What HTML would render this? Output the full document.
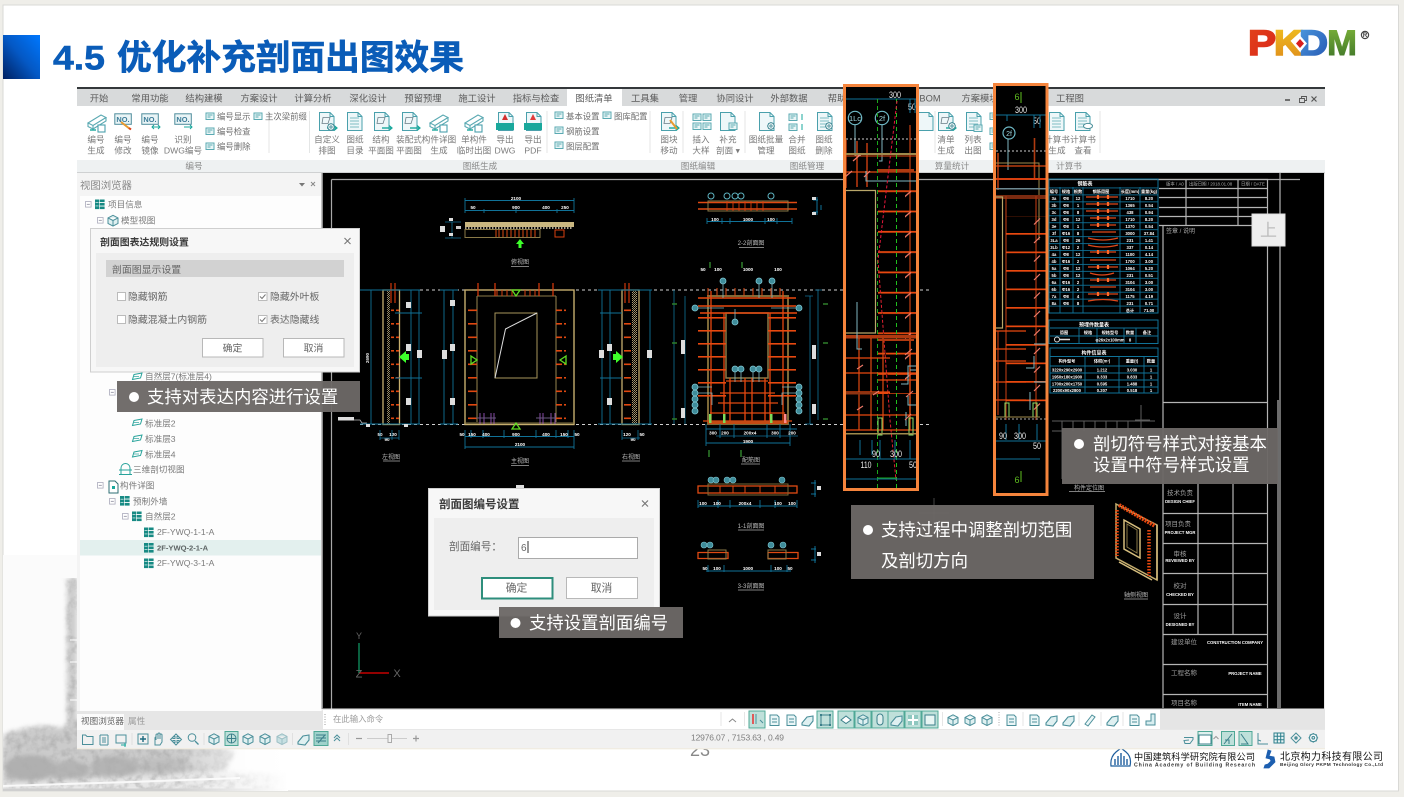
<!DOCTYPE html>
<html lang="zh"><head><meta charset="utf-8"><title>4.5 优化补充剖面出图效果</title>
<style>
html,body{margin:0;padding:0;width:1404px;height:797px;overflow:hidden;background:#efeee9}
svg{display:block;filter:blur(.35px)}
text{font-family:"Liberation Sans","Noto Sans CJK SC",sans-serif}
.tab{font-size:9.3px;fill:#5c5c5c;text-anchor:middle}
.rb{font-size:8.6px;fill:#7a7a7a;text-anchor:middle}
.rl{font-size:8.4px;fill:#6f6f6f}
.gl{font-size:8.6px;fill:#8a8a8a;text-anchor:middle}
.tr{font-size:8.6px;fill:#7b7b7b}
.dl{font-size:9.9px;fill:#666}
.call{font-size:17.4px;fill:#fff}
.dim{font-size:4.6px;fill:#fff;font-weight:bold;text-anchor:middle}
.dv{font-size:9.5px;fill:#e8e8e8;text-anchor:middle}
.lbl{font-size:6px;fill:#bbb;text-anchor:middle}
.tb{font-size:4.2px;fill:#fff;font-weight:bold;text-anchor:middle}
.tt{font-size:6.5px;fill:#a0a0a0;text-anchor:middle}
</style></head><body>
<svg width="1404" height="797" viewBox="0 0 1404 797" xmlns="http://www.w3.org/2000/svg">
<defs>
<linearGradient id="gblue" x1="1" y1="0" x2="0" y2="1"><stop offset="0" stop-color="#0078ff"/><stop offset=".5" stop-color="#0458c4"/><stop offset="1" stop-color="#002060"/></linearGradient>
<linearGradient id="gfade" x1="0" y1="0" x2="1" y2="0"><stop offset="0" stop-color="#fff" stop-opacity="0"/><stop offset=".6" stop-color="#fff" stop-opacity="0"/><stop offset="1" stop-color="#fff" stop-opacity="1"/></linearGradient>
<linearGradient id="lgP" x1="0" y1="0" x2="1" y2="1"><stop offset="0" stop-color="#e2441a"/><stop offset="1" stop-color="#d9251a"/></linearGradient>
<linearGradient id="lgK" x1="0" y1="0" x2="0" y2="1"><stop offset="0" stop-color="#f0c020"/><stop offset="1" stop-color="#de8a1a"/></linearGradient>
<linearGradient id="lgD" x1="0" y1="0" x2="1" y2="1"><stop offset="0" stop-color="#4d9be0"/><stop offset="1" stop-color="#2455b0"/></linearGradient>
<linearGradient id="lgM" x1="0" y1="0" x2="0" y2="1"><stop offset="0" stop-color="#7fb53a"/><stop offset="1" stop-color="#3a7028"/></linearGradient>
<filter id="soft"><feGaussianBlur stdDeviation="2.2"/></filter>
<filter id="tree" x="0" y="0" width="1" height="1"><feGaussianBlur in="SourceGraphic" stdDeviation="2.5" result="s"/><feTurbulence type="fractalNoise" baseFrequency=".14" numOctaves="3" seed="4" result="n"/><feColorMatrix in="n" type="matrix" values="0 0 0 0 .42 0 0 0 0 .42 0 0 0 0 .42 1.8 0 0 0 -.7" result="d"/><feComposite in="d" in2="s" operator="in" result="c"/><feMerge><feMergeNode in="s"/><feMergeNode in="c"/></feMerge></filter>

<pattern id="tableRows" x="1049" y="187.5" width="109" height="6.95" patternUnits="userSpaceOnUse"><path d="M0 .4H109" stroke="#107298" stroke-width=".9"/></pattern>
<pattern id="rungsA" x="0" y="170" width="80" height="20.3" patternUnits="userSpaceOnUse"><rect x="0" y="0" width="80" height="1.8" fill="#e8480f"/></pattern>
<pattern id="ticksA" x="0" y="168" width="20" height="20.3" patternUnits="userSpaceOnUse"><path d="M4 9L11 3" stroke="#ef7a6a" stroke-width="1.3"/></pattern>
<pattern id="rungsB" x="0" y="196" width="40" height="18.5" patternUnits="userSpaceOnUse"><rect width="40" height="1.7" fill="#e8480f"/></pattern>
<pattern id="ticksB" x="0" y="197" width="12" height="18.5" patternUnits="userSpaceOnUse"><path d="M2 9L8 3" stroke="#ef7a6a" stroke-width="1.2"/></pattern>
<pattern id="elevR" x="0" y="296" width="12" height="13.5" patternUnits="userSpaceOnUse"><rect width="10" height="1.6" fill="#e0480f"/></pattern>
<pattern id="hatch" x="0" y="0" width="2" height="2" patternUnits="userSpaceOnUse"><rect width="1" height="1" fill="#a89a70"/><rect x="1" y="1" width="1" height="1" fill="#8a8060"/></pattern>
<pattern id="secR" x="0" y="317" width="28" height="13" patternUnits="userSpaceOnUse"><rect width="28" height="1.6" fill="#e8480f"/></pattern>

<g id="stack"><rect x="0" y="0" width="4" height="9.6" fill="#178a84"/><rect x="4.6" y="0" width="5" height="2.6" fill="#178a84"/><rect x="4.6" y="3.5" width="5" height="2.6" fill="#178a84"/><rect x="4.6" y="7" width="5" height="2.6" fill="#178a84"/><path d="M.5 3.2h3M.5 6.4h3" stroke="#fff" stroke-width=".6"/></g>
<g id="slab" fill="none" stroke="#28a39b" stroke-width="1"><path d="M2 2.5L10 1 8.5 6 .5 7.5zM.5 7.5"/><path d="M2 4.5H7" stroke-width=".7"/></g>
<g id="minus"><rect x=".5" y=".5" width="5.6" height="5.6" fill="#fff" stroke="#aab" stroke-width=".8"/><path d="M1.8 3.3h3" stroke="#889" stroke-width=".8"/></g>

<g id="docb" fill="none" stroke="#4aa0ac" stroke-width="1"><path d="M1.5 .5H12L16 4.5V18.5H1.5z" fill="#eef7f9"/><path d="M12 .5V4.5H16"/></g>
<g id="docl" fill="none" stroke="#4aa0ac" stroke-width="1"><use href="#docb"/><path d="M4 6h9M4 9h9M4 12h9M4 15h9" stroke="#7fbcc4"/></g>
<g id="doca" fill="none"><use href="#docb"/><path d="M5 5.500h7l-2 6H4z" stroke="#6a7d86" stroke-width=".8"/><path d="M9 16h9" stroke="#19a89c" stroke-width="1.400"/><path d="M16 13.500l3 2.500-3 2.500" stroke="#19a89c" stroke-width="1.200"/></g>
<g id="beam" fill="none" stroke="#5aa9b2" stroke-width="1.100"><path d="M1 11L14 3l5 2.500L6 13.500zM1 11v3.500L6 17v-3.500M19 5.500v3.500L6 17"/><path d="M3 18h6" stroke="#19a89c" stroke-width="1.400"/><rect x="11" y="13" width="7" height="7" stroke="#4aa0ac" fill="#fff"/></g>
<g id="gear" fill="#fff" stroke="#4a8f9a" stroke-width="1"><circle cx="4" cy="4" r="3.200"/><circle cx="4" cy="4" r="1.100"/><path d="M4 0v1M4 7v1M0 4h1M7 4h1M1.200 1.200l.7.7M6.100 6.100l.7.7M6.800 1.200l-.7.7M1.900 6.100l-.7.7" stroke-width="1"/></g>
<g id="noi" ><rect x=".8" y=".8" width="16.500" height="10.500" fill="#e9f4f6" stroke="#4f8d9c" stroke-width="1"/><text x="9" y="9" text-anchor="middle" font-size="7.400" font-weight="bold" fill="#3c7c98">NO.</text></g>
<g id="small" fill="none" stroke="#5aa9b2" stroke-width="1"><rect x="1" y="1" width="8" height="6.500" fill="#eaf6f7"/><path d="M2.500 3h5M2.500 5h3"/></g>
<g id="cube" fill="#dff0f1" stroke="#4b8f9a" stroke-width="1"><path d="M6 .8L11 3.400V9L6 11.600 1 9V3.400zM1 3.400L6 6l5-2.600M6 6v5.600"/></g>
<g id="cubeb" fill="#9fd0d4" stroke="#4b8f9a" stroke-width="1"><path d="M6 .8L11 3.400V9L6 11.600 1 9V3.400zM1 3.400L6 6l5-2.600M6 6v5.600"/></g>
<g id="tdoc" fill="#eaf6f7" stroke="#4b8f9a" stroke-width="1"><path d="M2 1H9L11 3V11.500H2z"/><path d="M4 5h5M4 8h5" fill="none"/></g>
<g id="tw" fill="none" stroke="#4b8f9a" stroke-width="1.100"><path d="M1 9L6 3l6-1v5l-4 5-7-1z" fill="#dff0f1"/></g>
<g id="hlb"><rect x="0" y="0" width="16" height="17" fill="#bfe0da" stroke="#4fa896" stroke-width="1"/></g>
</defs>

<!-- page -->
<rect width="1404" height="797" fill="#efeee9"/>
<rect x="3" y="5" width="1395.500" height="786" fill="#fff" stroke="#d9d9d6" stroke-width="1"/>
<rect x="3" y="35" width="37" height="44" fill="url(#gblue)"/>
<text x="53" y="69.500" font-size="34.700" font-weight="bold" fill="#0a5cb8" stroke="#0a5cb8" stroke-width=".6" textLength="52" lengthAdjust="spacingAndGlyphs">4.5</text>
<text x="117" y="69.500" font-size="34.700" font-weight="bold" fill="#0a5cb8" stroke="#0a5cb8" stroke-width=".6">优化补充剖面出图效果</text>

<!-- logo -->
<text x="1248" y="55" font-size="35" font-weight="bold" fill="url(#lgP)" textLength="28" lengthAdjust="spacingAndGlyphs" stroke="url(#lgP)" stroke-width="1.600">P</text>
<text x="1274" y="55" font-size="35" font-weight="bold" fill="url(#lgK)" textLength="28" lengthAdjust="spacingAndGlyphs" stroke="url(#lgK)" stroke-width="1.600">K</text>
<text x="1299" y="55" font-size="35" font-weight="bold" fill="url(#lgD)" textLength="29" lengthAdjust="spacingAndGlyphs" stroke="url(#lgD)" stroke-width="1.600">D</text>
<path d="M1293 43.500L1300 35.500 1307 43.500 1300 52z" fill="#fff"/><path d="M1296 43.500L1300 39 1304 43.500 1300 48z" fill="#d81e1e"/>
<text x="1327" y="55" font-size="35" font-weight="bold" fill="url(#lgM)" textLength="30" lengthAdjust="spacingAndGlyphs" stroke="url(#lgM)" stroke-width="1">M</text>
<circle cx="1365" cy="35" r="3.600" fill="none" stroke="#444" stroke-width="1.200"/><text x="1365" y="37.200" font-size="6" font-weight="bold" text-anchor="middle" fill="#333">R</text>

<!-- building photo -->
<g>
<rect x="3" y="555" width="285" height="236" fill="#fbfbfb"/>
<g filter="url(#tree)">
<rect x="67" y="578" width="10" height="160" fill="#cdcdcd"/>
<path d="M3 735 Q35 722 60 728 L95 715 L130 732 L200 738 L235 752 L225 770 L120 785 L3 790Z" fill="#cbcbcb"/>
<ellipse cx="30" cy="768" rx="26" ry="13" fill="#b0b0b0"/><ellipse cx="70" cy="771" rx="20" ry="10" fill="#b4b4b4"/><ellipse cx="115" cy="767" rx="24" ry="11" fill="#b4b4b4"/><ellipse cx="165" cy="766" rx="26" ry="8" fill="#bebebe"/><ellipse cx="205" cy="758" rx="20" ry="7" fill="#cfcfcf"/>
<path d="M3 783 L210 772 L288 775 L288 791 L3 791Z" fill="#e6e6e6"/>
</g>
<path d="M3 786 L130 782 L240 778" stroke="#f8f8f8" stroke-width="2" fill="none"/>
<path d="M3 788.500 L288 788.500 L288 791 L3 791Z" fill="#cfcfcf"/>
<path d="M70 640h8M70 662h8M70 700h8" stroke="#fff" stroke-width="1"/>
<rect x="3" y="555" width="285" height="236" fill="url(#gfade)"/>
</g>

<!-- bottom right logos -->
<g>
<path d="M1111 766Q1110 757 1116 752L1121 748 1126 752Q1132 757 1130 766Z" fill="#fff" stroke="#1f5f9e" stroke-width="1.200"/>
<path d="M1115 765v-6M1118 765v-9M1121 765v-12M1124 765v-9M1127 765v-6" stroke="#1f5f9e" stroke-width="1.400"/>
<text x="1134" y="760" font-size="9.200" fill="#111" textLength="121" lengthAdjust="spacing">中国建筑科学研究院有限公司</text>
<text x="1134" y="766.500" font-size="5.200" font-weight="bold" fill="#333" textLength="121">China Academy of Building Research</text>
<path d="M1268 750l3 1-2 5 5 1 1 5-6 6h-5l1-3 3-1 3-3-1-2-4-1z" fill="#1d5fb0" stroke="#1d5fb0" stroke-width=".8"/>
<text x="1280" y="760" font-size="10" fill="#111" textLength="103" lengthAdjust="spacing">北京构力科技有限公司</text>
<text x="1280" y="766" font-size="4.800" font-weight="bold" fill="#333" textLength="103">Beijing Glory PKPM Technology Co.,Ltd</text>
</g>
<text x="700" y="756" font-size="18" text-anchor="middle" fill="#888">23</text>

<!-- app window -->
<rect x="77" y="87" width="1248" height="662" fill="#e9e9e9"/>
<rect x="77" y="87" width="1248" height="2.200" fill="#34383b"/>
<rect x="77" y="89" width="1248" height="17" fill="#d8dadb"/>
<rect x="567" y="89" width="55" height="17" fill="#fff"/>
<rect x="77" y="106" width="1248" height="54" fill="#fff"/>
<rect x="77" y="160" width="1248" height="12" fill="#eef1f2"/>
<rect x="77" y="172" width="1248" height="1.500" fill="#cfd1d2"/>
<g>
<text class="tab" x="99" y="101.500">开始</text><text class="tab" x="150" y="101.500">常用功能</text><text class="tab" x="204" y="101.500">结构建模</text><text class="tab" x="259" y="101.500">方案设计</text><text class="tab" x="313" y="101.500">计算分析</text><text class="tab" x="368" y="101.500">深化设计</text><text class="tab" x="423" y="101.500">预留预埋</text><text class="tab" x="477" y="101.500">施工设计</text><text class="tab" x="536" y="101.500">指标与检查</text><text class="tab" x="594" y="101.500">图纸清单</text><text class="tab" x="645" y="101.500">工具集</text><text class="tab" x="688" y="101.500">管理</text><text class="tab" x="735" y="101.500">协同设计</text><text class="tab" x="789" y="101.500">外部数据</text><text class="tab" x="837" y="101.500">帮助</text><text class="tab" x="930" y="101.500">BOM</text><text class="tab" x="980" y="101.500">方案模块</text><text class="tab" x="1070" y="101.500">工程图</text>
</g>
<path d="M1285 100h5" stroke="#555" stroke-width="1.600"/><path d="M1299.500 98.500h5v4h-5zM1301.500 98.500v-2h5v4h-2" fill="none" stroke="#555" stroke-width=".9"/><path d="M1311.500 96.500l5 5M1316.500 96.500l-5 5" stroke="#555" stroke-width="1.200"/>

<!-- ribbon icons -->
<use href="#beam" x="87" y="112"/>
<use href="#noi" x="114" y="113"/><path d="M121 122l9 7" stroke="#e89a30" stroke-width="2"/><path d="M129 128l2 1.500" stroke="#d8401c" stroke-width="2"/>
<use href="#noi" x="141" y="113"/><path d="M152 127h8M154 125l-2 2 2 2M158 125l2 2-2 2" stroke="#19a89c" fill="none"/>
<use href="#noi" x="174" y="113"/><path d="M184 127h8M190 125l2 2-2 2" stroke="#19a89c" fill="none"/>
<use href="#small" x="205" y="112"/><use href="#small" x="205" y="127"/><use href="#small" x="205" y="142"/>
<use href="#small" x="253" y="112"/>
<use href="#doca" x="318" y="112"/><use href="#docl" x="346" y="112"/><use href="#doca" x="373" y="112"/><use href="#doca" x="401" y="112"/><use href="#beam" x="429" y="112"/><use href="#beam" x="464" y="112"/>
<use href="#gear" x="327" y="123"/>
<g><use href="#docb" x="497" y="112"/><rect x="496" y="123" width="18" height="7" fill="#19a89c"/><path d="M505 114l-3 6h6z" fill="#d32f2f"/></g>
<g><use href="#docb" x="525" y="112"/><rect x="524" y="123" width="18" height="7" fill="#19a89c"/><path d="M533 114l-3 6h6z" fill="#e03c3c"/></g>
<use href="#small" x="554" y="111"/><use href="#small" x="554" y="126"/><use href="#small" x="554" y="141"/><use href="#small" x="602" y="111"/>
<use href="#doca" x="660" y="112"/><path d="M670 120l7 9" stroke="#e89a30" stroke-width="2"/>
<use href="#small" x="692" y="113"/><use href="#small" x="702" y="113"/><use href="#small" x="692" y="122"/><use href="#small" x="702" y="122"/>
<use href="#docb" x="719" y="112"/><use href="#small" x="728" y="122"/>
<use href="#docb" x="758" y="112"/><use href="#gear" x="767" y="122"/>
<use href="#small" x="788" y="113"/><use href="#small" x="788" y="123"/><path d="M802 114v6M802 124v6" stroke="#19a89c"/>
<use href="#docl" x="816" y="112"/><use href="#gear" x="825" y="122"/>
<use href="#docb" x="917" y="112"/>
<use href="#doca" x="937" y="112"/><use href="#gear" x="948" y="122"/>
<use href="#docl" x="965" y="112"/><use href="#small" x="973" y="124"/>
<use href="#small" x="989" y="112"/><use href="#small" x="989" y="127"/><use href="#small" x="989" y="142"/>
<use href="#docl" x="1048" y="112"/>
<use href="#docl" x="1074" y="112"/><ellipse cx="1088" cy="126" rx="4.500" ry="2.600" fill="#fff" stroke="#4a8f9a"/>
<path d="M269 111v42M309.500 111v42M547 111v42M650 111v42M683 111v42M745 111v42M935 111v42M1100 111v42" stroke="#e4e6e6" stroke-width="1"/>
<!-- ribbon labels -->
<g>
<text class="rb" x="96" y="142.500">编号</text><text class="rb" x="96" y="153.500">生成</text>
<text class="rb" x="123" y="142.500">编号</text><text class="rb" x="123" y="153.500">修改</text>
<text class="rb" x="150" y="142.500">编号</text><text class="rb" x="150" y="153.500">镜像</text>
<text class="rb" x="183" y="142.500">识别</text><text class="rb" x="183" y="153.500">DWG编号</text>
<text class="rl" x="217" y="119.500">编号显示</text><text class="rl" x="217" y="134.500">编号检查</text><text class="rl" x="217" y="149.500">编号删除</text><text class="rl" x="265" y="119.500">主次梁前缀</text>
<text class="rb" x="327" y="142.500">自定义</text><text class="rb" x="327" y="153.500">排图</text>
<text class="rb" x="355" y="142.500">图纸</text><text class="rb" x="355" y="153.500">目录</text>
<text class="rb" x="381" y="142.500">结构</text><text class="rb" x="381" y="153.500">平面图</text>
<text class="rb" x="409" y="142.500">装配式</text><text class="rb" x="409" y="153.500">平面图</text>
<text class="rb" x="439" y="142.500">构件详图</text><text class="rb" x="439" y="153.500">生成</text>
<text class="rb" x="474" y="142.500">单构件</text><text class="rb" x="474" y="153.500">临时出图</text>
<text class="rb" x="505" y="142.500">导出</text><text class="rb" x="505" y="153.500">DWG</text>
<text class="rb" x="533" y="142.500">导出</text><text class="rb" x="533" y="153.500">PDF</text>
<text class="rl" x="566" y="119.500">基本设置</text><text class="rl" x="566" y="134.500">钢筋设置</text><text class="rl" x="566" y="149.500">图层配置</text><text class="rl" x="614" y="119.500">图库配置</text>
<text class="rb" x="669" y="142.500">图块</text><text class="rb" x="669" y="153.500">移动</text>
<text class="rb" x="701" y="142.500">插入</text><text class="rb" x="701" y="153.500">大样</text>
<text class="rb" x="728" y="142.500">补充</text><text class="rb" x="728" y="153.500">剖面 ▾</text>
<text class="rb" x="766" y="142.500">图纸批量</text><text class="rb" x="766" y="153.500">管理</text>
<text class="rb" x="797" y="142.500">合并</text><text class="rb" x="797" y="153.500">图纸</text>
<text class="rb" x="824" y="142.500">图纸</text><text class="rb" x="824" y="153.500">删除</text>
<text class="rb" x="946" y="142.500">清单</text><text class="rb" x="946" y="153.500">生成</text>
<text class="rb" x="973" y="142.500">列表</text><text class="rb" x="973" y="153.500">出图</text>
<text class="rb" x="1057" y="142.500">计算书</text><text class="rb" x="1057" y="153.500">生成</text>
<text class="rb" x="1083" y="142.500">计算书</text><text class="rb" x="1083" y="153.500">查看</text>
<text class="gl" x="194" y="169">编号</text><text class="gl" x="480" y="169">图纸生成</text><text class="gl" x="698" y="169">图纸编辑</text><text class="gl" x="807" y="169">图纸管理</text><text class="gl" x="952" y="169">算量统计</text><text class="gl" x="1069" y="169">计算书</text>
</g>

<!-- left panel -->
<rect x="77" y="173" width="245" height="538" fill="#f4f4f4"/>
<text x="80" y="189" font-size="10.400" fill="#888">视图浏览器</text>
<path d="M299 183h6l-3 3.500z" fill="#777"/><path d="M311 182l4 4M315 182l-4 4" stroke="#888" stroke-width="1"/>
<rect x="80" y="196" width="241" height="515" fill="#fdfdfd"/>
<rect x="80" y="540" width="241" height="15.500" fill="#e3f0ee"/>
<use href="#minus" x="85" y="201"/><use href="#stack" x="95" y="199.500"/><text class="tr" x="108" y="207.500">项目信息</text>
<use href="#minus" x="97" y="217"/><use href="#cube" x="107" y="214.500"/><text class="tr" x="121" y="223.500">模型视图</text>
<use href="#slab" x="132" y="372"/><text class="tr" x="145" y="379.500">自然层7(标准层4)</text>
<use href="#minus" x="109" y="389"/>
<use href="#slab" x="132" y="418"/><text class="tr" x="145" y="426.500">标准层2</text>
<use href="#slab" x="132" y="434"/><text class="tr" x="145" y="442">标准层3</text>
<use href="#slab" x="132" y="449.500"/><text class="tr" x="145" y="457.500">标准层4</text>
<path d="M121 474v-6a4.500 4.500 0 0 1 9 0v6M119 474.500h13M119 470h13" fill="none" stroke="#28a39b" stroke-width="1"/><text class="tr" x="133" y="472.500">三维剖切视图</text>
<use href="#minus" x="97" y="482"/><path d="M109 481h6l3 3v9h-9z" fill="#fff" stroke="#2d6e74" stroke-width="1"/><rect x="112" y="486" width="3" height="3" fill="#19a89c"/><text class="tr" x="120" y="488.500">构件详图</text>
<use href="#minus" x="109" y="498"/><use href="#stack" x="120" y="496"/><text class="tr" x="133" y="504.500">预制外墙</text>
<use href="#minus" x="122" y="513"/><use href="#stack" x="132" y="511.500"/><text class="tr" x="145" y="519.500">自然层2</text>
<use href="#stack" x="144" y="527.500"/><text class="tr" x="157" y="535.200" font-size="7.600">2F-YWQ-1-1-A</text>
<use href="#stack" x="144" y="543"/><text x="157" y="550.700" font-size="7.600" font-weight="bold" fill="#5d6464">2F-YWQ-2-1-A</text>
<use href="#stack" x="144" y="558.500"/><text class="tr" x="157" y="566.200" font-size="7.600">2F-YWQ-3-1-A</text>
<rect x="77" y="711" width="246" height="19" fill="#e6e6e6"/>
<rect x="77" y="714" width="47" height="16" fill="#fbfbfb"/>
<text x="81" y="724" font-size="8.600" fill="#666">视图浏览器</text><text x="128" y="724" font-size="8.600" fill="#999">属性</text>

<!-- canvas -->
<rect x="323" y="173" width="1001" height="535.500" fill="#000"/>
<rect x="321.500" y="173" width="1.500" height="536" fill="#8b8b8b"/>
<path d="M331.500 179.500H1300M331.500 179.500V708.500" stroke="#a8a8a8" stroke-width="1.200" fill="none"/>

<!-- top section -->
<g>
<path d="M465 200.500H574M465 210.500H574M465 198v15M484 209v4M516 209v4M557 209v4M574 198v15" stroke="#107298" stroke-width=".9" fill="none"/>
<text class="dim" x="516" y="200">2100</text><text class="dim" x="473" y="209">50</text><text class="dim" x="516" y="209">900</text><text class="dim" x="546" y="209">400</text><text class="dim" x="565" y="209">250</text>
<rect x="465" y="222" width="109" height="5" fill="#c9b680"/><path d="M465 228H573" stroke="#e8dcc0" stroke-width="1.500" stroke-dasharray="1.500 1.500"/><rect x="465" y="229.500" width="75" height="8" fill="none" stroke="#8a7a48" stroke-width="1"/><path d="M496 230v7M499 230v7M503 230v7M507 230v7M511 230v7M515 230v7M519 230v7M523 230v7M527 230v7M531 230v7M535 230v7" stroke="#dc4a12" stroke-width="1"/><rect x="555" y="230" width="9" height="7" fill="none" stroke="#d8400f" stroke-width="1"/>
<path d="M520 239l-4 5h2.500v4h3v-4h2.500z" fill="#3dff2a"/>
<text class="lbl" x="520" y="264">俯视图</text><path d="M511 266.500h18" stroke="#aaa" stroke-width=".7"/>
<path d="M445 222h16M445 238h16M452 222v16" stroke="#107298" fill="none" stroke-width=".8"/><rect x="440" y="226" width="5" height="6" fill="#ddd"/><rect x="449" y="218" width="4" height="3" fill="#ddd"/><rect x="449" y="233" width="4" height="3" fill="#ddd"/><rect x="456" y="226" width="5" height="3" fill="#ccc"/>
</g>

<!-- 2-2 section -->
<g>
<path d="M698 202.500H797M698 209H797" stroke="#e04a12" stroke-width="1.600"/><rect x="708" y="201" width="80" height="10" fill="none" stroke="#8a7a48"/><path d="M727 201v10M733 201v10M739 201v10M745 201v10M751 201v10M757 201v10M763 201v10" stroke="#d8400f" stroke-width=".9"/>
<g fill="none" stroke="#5fb4c2" stroke-width="1"><circle cx="711" cy="196" r="3"/><circle cx="727" cy="196" r="3"/><circle cx="735" cy="196" r="3"/><circle cx="741" cy="196" r="3"/><circle cx="771" cy="196" r="3"/></g>
<path d="M707 221.500H792M707 218v6M722 218v6M730 218v6M765 218v6M777 218v6M792 218v6" stroke="#107298" stroke-width=".9"/>
<text class="dim" x="715" y="221">100</text><text class="dim" x="748" y="221">1000</text><text class="dim" x="771" y="221">100</text>
<text class="lbl" x="751" y="245">2-2剖面图</text><path d="M739 247.500h25" stroke="#aaa" stroke-width=".7"/>
<path d="M817 197v18M813 200h5M813 212h5M821 205v5" stroke="#107298"/><rect x="812" y="197" width="4" height="3" fill="#ddd"/><rect x="812" y="212" width="4" height="3" fill="#ddd"/>
<path d="M710 262v6M742 262v6" stroke="#2f7f2a" stroke-width="1.500"/>
<text class="dim" x="703" y="271">50</text><text class="dim" x="718" y="271">100</text><text class="dim" x="748" y="271">1000</text><text class="dim" x="778" y="271">100</text>
</g>

<!-- dashed lines -->
<path d="M360 290H844M920 290H930M360 424.500H844M920 424.500H930" stroke="#d0d0d0" stroke-width=".9" stroke-dasharray="3 3"/>

<!-- left elev -->
<g>
<rect x="383" y="290" width="16.500" height="134.500" fill="none" stroke="#c6ae6e" stroke-width="1.300"/>
<rect x="387" y="291" width="3" height="133" fill="url(#hatch)"/>
<rect x="391" y="300" width="8" height="124" fill="url(#elevR)"/>
<path d="M391 283v20M395 283v20" stroke="#e03c0c" stroke-width="1.100"/>
<path d="M371 290v134M411 290v134M419 290v134M360 290h60M360 424h60M395 313h27M395 378h27" stroke="#107298" stroke-width=".9" fill="none"/>
<path d="M409 354v6l-3-0v3l-7-6 7-6v3z" fill="#3dff2a"/>
<text class="dv" style="font-size:4.500px;font-weight:bold" x="369" y="358" transform="rotate(-90 369 358)">2690</text>
<rect x="406" y="344" width="5" height="7" fill="#ddd"/><rect x="406" y="398" width="5" height="7" fill="#ddd"/><rect x="406" y="302" width="5" height="6" fill="#ddd"/><rect x="417" y="350" width="5" height="8" fill="#ddd"/>
<rect x="338" y="417" width="16" height="3.500" fill="#ddd"/>
<path d="M354 420h6l2 3h5" stroke="#bbb" fill="none" stroke-width=".8"/>
<rect x="366" y="424" width="4" height="3" fill="#ddd"/><rect x="404" y="424" width="4" height="3" fill="#ddd"/>
<text class="dim" x="380" y="436">50</text><text class="dim" x="393" y="436">120</text><text class="dim" x="387" y="441">90</text>
<path d="M380 430v10M392 430v10M399 430v10M380 438h19" stroke="#107298" stroke-width=".8"/>
<text class="lbl" x="391" y="459">左视图</text><path d="M383 461h17" stroke="#aaa" stroke-width=".7"/>
</g>

<!-- main elev -->
<g>
<rect x="465" y="290" width="109" height="134.500" fill="none" stroke="#c6ae6e" stroke-width="1.400"/>
<path d="M477 296V422M556 296V422M477 296H556M465 423H574" stroke="#8a7a48" stroke-width="1.100" fill="none"/>
<rect x="495" y="313" width="42" height="65" fill="none" stroke="#a8965c" stroke-width="1"/>
<path d="M537 313L505.500 329 495 378" fill="none" stroke="#ddd" stroke-width="1"/>
<rect x="467" y="300" width="10" height="122" fill="url(#elevR)"/><rect x="556" y="300" width="10" height="122" fill="url(#elevR)"/>
<path d="M478 283v13M495 283v13M539 283v13M553 283v13" stroke="#e03c0c" stroke-width="1.200"/>
<path d="M497 290v6M502 290v6M507 290v6M512 290v6M525 290v6M530 290v6M535 290v6" stroke="#d8400f"/>
<path d="M512 290l4 6 4-6zM471 356l6 4-6 4zM566 356l-6 4 6 4zM512 429l4-6 4 6z" fill="none" stroke="#5fdc22" stroke-width="1.300"/>
<path d="M480 413v11M484 413v11M491 413v11M494 413v11M540 413v11M543 413v11M551 413v11M555 413v11" stroke="#a85fd0" stroke-width=".8"/><path d="M476 418h20M536 418h20" stroke="#6a5a80" stroke-width="1"/>
<path d="M444 290v134M453 290v134M440 290h18M440 424h18" stroke="#107298" stroke-width=".9" fill="none"/>
<rect x="442" y="350" width="5" height="9" fill="#ddd"/><rect x="450" y="300" width="5" height="6" fill="#ddd"/><rect x="450" y="344" width="5" height="7" fill="#ddd"/><rect x="450" y="398" width="5" height="7" fill="#ddd"/>
<path d="M465 436.500H574M465 447H574M465 430v19M471 430v8M483 430v8M504 430v8M536 430v8M556 430v8M568 430v8M574 430v19" stroke="#107298" stroke-width=".9"/>
<text class="dim" x="462" y="436">50</text><text class="dim" x="472" y="436">150</text><text class="dim" x="486" y="436">400</text><text class="dim" x="516" y="436">900</text><text class="dim" x="546" y="436">400</text><text class="dim" x="564" y="436">150</text><text class="dim" x="577" y="436">50</text><text class="dim" x="520" y="446">2100</text>
<text class="lbl" x="520" y="463">主视图</text><path d="M511 465.500h18" stroke="#aaa" stroke-width=".7"/>
<rect x="516" y="485" width="8" height="4" fill="#ddd"/>
</g>

<!-- right elev -->
<g>
<rect x="622" y="290" width="17" height="134.500" fill="none" stroke="#c6ae6e" stroke-width="1.300"/>
<rect x="632" y="291" width="5" height="133" fill="url(#hatch)"/>
<rect x="623" y="300" width="8" height="124" fill="url(#elevR)"/>
<path d="M625 283v20M629 283v20" stroke="#e03c0c" stroke-width="1.100"/>
<path d="M602 290v134M610 290v134M650 290v134M598 290h54M598 424h54M600 313h22M600 378h22" stroke="#107298" stroke-width=".9" fill="none"/>
<path d="M613 354v6h3v3l7-6-7-6v3z" fill="#3dff2a"/>
<rect x="607" y="344" width="5" height="7" fill="#ddd"/><rect x="607" y="398" width="5" height="7" fill="#ddd"/><rect x="647" y="350" width="5" height="8" fill="#ddd"/><rect x="599" y="350" width="5" height="8" fill="#ddd"/>
<text class="dim" x="627" y="436">120</text><text class="dim" x="642" y="436">50</text><text class="dim" x="633" y="441">90</text><path d="M622 430v10M638 430v10M622 438h18" stroke="#107298" stroke-width=".8"/>
<text class="lbl" x="631" y="459">右视图</text><path d="M622 461h18" stroke="#aaa" stroke-width=".7"/>
</g>

<!-- rebar section -->
<g>
<rect x="708" y="296" width="80" height="128" fill="none" stroke="#7d6a38" stroke-width="2"/>
<rect x="726" y="313" width="42" height="65" fill="#000" stroke="#8a7a48" stroke-width="1.500"/>
<path d="M708 296v-8M717 296v-8M726 296v-8M735 296v-8M744 296v-8M753 296v-8M762 296v-8M771 296v-8M780 296v-8" stroke="#e04a12" stroke-width="1"/>
<path d="M698 306H796M700 313H797M698 298H796M705 313H790" stroke="#e8480f" stroke-width="1.500"/>
<rect x="698" y="317" width="28" height="90" fill="url(#secR)"/><rect x="768" y="317" width="28" height="90" fill="url(#secR)"/>
<path d="M711 291V424M724 313V424M770 313V424M783 291V424M730 378V424M745 378V424M752 378V424M765 378V424" stroke="#e8480f" stroke-width="1.300"/>
<path d="M726 381H768M720 393H775M718 403H778M710 413H785M703 421H792" stroke="#e04a12" stroke-width="1.200"/>
<rect x="708" y="421" width="80" height="3" fill="#c44a14"/>
<rect x="709" y="414" width="2.500" height="9" fill="#7fdc5a"/><rect x="723" y="414" width="2.500" height="9" fill="#7fdc5a"/><rect x="770" y="414" width="2.500" height="9" fill="#7fdc5a"/><rect x="784" y="414" width="2.500" height="9" fill="#ff8a8a"/>
<g fill="#3f8c9a" stroke="#7fc8d4" stroke-width=".8"><circle cx="723" cy="281" r="3"/><circle cx="759" cy="281" r="3"/><circle cx="772" cy="281" r="3"/><circle cx="695" cy="308" r="3"/><circle cx="799" cy="308" r="3"/><circle cx="735" cy="322" r="3"/><circle cx="735" cy="369" r="3"/><circle cx="741" cy="369" r="3"/><circle cx="753" cy="369" r="3"/><circle cx="759" cy="369" r="3"/><circle cx="695" cy="387" r="3"/><circle cx="695" cy="393" r="3"/><circle cx="695" cy="399" r="3"/><circle cx="695" cy="405" r="3"/><circle cx="695" cy="411" r="3"/><circle cx="799" cy="387" r="3"/><circle cx="799" cy="393" r="3"/><circle cx="799" cy="399" r="3"/><circle cx="799" cy="405" r="3"/><circle cx="799" cy="411" r="3"/></g>
<path d="M723 284v14M759 284v14M772 284v14M698 308h26M796 308h-25M735 319v-10M735 372v10M741 372v10M753 372v10M759 372v10M698 387h14M698 393h14v12M796 387h-14M796 393h-14v12" stroke="#7fb6c0" stroke-width=".8" fill="none"/>
<path d="M685 296v128M716 436H798M674 290v134" stroke="#107298" stroke-width=".8" fill="none"/>
<path d="M706 429H797M706 443H790M706 424v22M720 424v14M734 424v14M767 424v14M780 424v14M790 424v22" stroke="#107298" stroke-width=".9"/>
<text class="dim" x="713" y="434.500">300</text><text class="dim" x="725" y="434.500">200</text><text class="dim" x="750" y="434.500">200x4</text><text class="dim" x="775" y="434.500">300</text><text class="dim" x="792" y="434.500">200</text><text class="dim" x="748" y="443">1900</text>
<path d="M810 296v128M805 296h8M805 424h8M818 290v130M815 290h7" stroke="#107298" stroke-width=".8" fill="none"/>
<rect x="812" y="345" width="4" height="14" fill="#ddd"/><rect x="812" y="404" width="4" height="10" fill="#ddd"/><rect x="681" y="340" width="4" height="14" fill="#ddd"/><rect x="681" y="408" width="4" height="10" fill="#ddd"/>
<path d="M672 304h5M672 343h5M672 419h5M823 304h5M823 343h5M823 419h5" stroke="#2f7f2a" stroke-width="1.500"/>
<path d="M709 450v7M741 450v7" stroke="#2f7f2a" stroke-width="1.500"/>
<text class="lbl" x="751" y="462">配筋图</text><path d="M741 464h19" stroke="#aaa" stroke-width=".7"/>
</g>

<!-- 1-1 -->
<g>
<rect x="698" y="486" width="99" height="7" fill="none" stroke="#e04a12" stroke-width="1.300"/><rect x="708" y="484" width="80" height="11" fill="none" stroke="#7d6a38"/>
<path d="M720 486v7M733 486v7M745 486v7M760 486v7M775 486v7" stroke="#e04a12"/>
<g fill="#3f8c9a" stroke="#7fc8d4" stroke-width=".6"><circle cx="711" cy="480" r="3"/><circle cx="716" cy="480" r="3"/><circle cx="727" cy="480" r="3"/><circle cx="733" cy="480" r="3"/><circle cx="782" cy="480" r="3"/></g>
<path d="M698 506H797M698 500v8M718 500v8M730 500v8M760 500v8M775 500v8M797 500v8" stroke="#107298" stroke-width=".9"/>
<text class="dim" x="703" y="505">100</text><text class="dim" x="717" y="505">100</text><text class="dim" x="745" y="505">200x4</text><text class="dim" x="778" y="505">100</text><text class="dim" x="792" y="505">100</text>
<text class="lbl" x="751" y="528">1-1剖面图</text><path d="M738 530h26" stroke="#aaa" stroke-width=".7"/>
<path d="M815 480v17M811 483h5M811 494h5" stroke="#107298"/><rect x="817" y="486" width="4" height="4" fill="#ddd"/>
</g>
<!-- 3-3 -->
<g>
<path d="M698 552.500h30v6h-30zM768 552.500h30v6h-30z" fill="none" stroke="#e04a12" stroke-width="1.300"/>
<rect x="708" y="550" width="18" height="9" fill="none" stroke="#8a7a48"/><rect x="768" y="550" width="18" height="9" fill="none" stroke="#8a7a48"/>
<g fill="#3f8c9a" stroke="#7fc8d4" stroke-width=".6"><circle cx="704" cy="545" r="3"/><circle cx="710" cy="545" r="3"/><circle cx="771" cy="545" r="3"/><circle cx="783" cy="545" r="3"/></g>
<path d="M706 571H791M708 565v7M724 565v7M771 565v7M787 565v7" stroke="#107298" stroke-width=".9"/>
<text class="dim" x="705" y="570">50</text><text class="dim" x="717" y="570">100</text><text class="dim" x="748" y="570">1000</text><text class="dim" x="778" y="570">100</text><text class="dim" x="790" y="570">50</text>
<text class="lbl" x="751" y="588">3-3剖面图</text><path d="M738 590h26" stroke="#aaa" stroke-width=".7"/>
<path d="M815 546v17M811 549h5M811 560h5" stroke="#107298"/><rect x="817" y="552" width="4" height="4" fill="#ddd"/>
</g>

<!-- big rebar table -->
<g>
<rect x="1049" y="179" width="109" height="134" fill="none" stroke="#107298" stroke-width="1"/>
<rect x="1049" y="187.500" width="109" height="125" fill="url(#tableRows)"/>
<path d="M1060 187v126M1073 187v126M1083 187v126M1120 187v126M1140 187v126" stroke="#107298" stroke-width=".9"/>
<text x="1085" y="185.500" font-size="5" font-weight="bold" fill="#fff" text-anchor="middle">钢筋表</text>
<g class="tb">
<text class="tb" x="1054" y="193">编号</text><text class="tb" x="1066" y="193">规格</text><text class="tb" x="1078" y="193">根数</text><text class="tb" x="1101" y="193">钢筋简图</text><text class="tb" x="1130" y="193">长度(mm)</text><text class="tb" x="1149" y="193">重量(kg)</text>
</g>
<g>
<text class="tb" x="1054" y="200">3a</text><text class="tb" x="1066" y="200">Φ8</text><text class="tb" x="1078" y="200">12</text><text class="tb" x="1130" y="200">1710</text><text class="tb" x="1149" y="200">8.20</text>
<text class="tb" x="1054" y="207">3b</text><text class="tb" x="1066" y="207">Φ8</text><text class="tb" x="1078" y="207">1</text><text class="tb" x="1130" y="207">1365</text><text class="tb" x="1149" y="207">0.54</text>
<text class="tb" x="1054" y="214">3c</text><text class="tb" x="1066" y="214">Φ8</text><text class="tb" x="1078" y="214">8</text><text class="tb" x="1130" y="214">438</text><text class="tb" x="1149" y="214">0.94</text>
<text class="tb" x="1054" y="221">3d</text><text class="tb" x="1066" y="221">Φ8</text><text class="tb" x="1078" y="221">12</text><text class="tb" x="1130" y="221">1710</text><text class="tb" x="1149" y="221">8.20</text>
<text class="tb" x="1054" y="228">3e</text><text class="tb" x="1066" y="228">Φ8</text><text class="tb" x="1078" y="228">1</text><text class="tb" x="1130" y="228">1370</text><text class="tb" x="1149" y="228">0.54</text>
<text class="tb" x="1054" y="235">3f</text><text class="tb" x="1066" y="235">Φ16</text><text class="tb" x="1078" y="235">8</text><text class="tb" x="1130" y="235">3000</text><text class="tb" x="1149" y="235">37.84</text>
<text class="tb" x="1054" y="242">3La</text><text class="tb" x="1066" y="242">Φ8</text><text class="tb" x="1078" y="242">26</text><text class="tb" x="1130" y="242">231</text><text class="tb" x="1149" y="242">1.41</text>
<text class="tb" x="1054" y="249">3Lb</text><text class="tb" x="1066" y="249">Φ12</text><text class="tb" x="1078" y="249">2</text><text class="tb" x="1130" y="249">337</text><text class="tb" x="1149" y="249">0.14</text>
<text class="tb" x="1054" y="256">4a</text><text class="tb" x="1066" y="256">Φ8</text><text class="tb" x="1078" y="256">12</text><text class="tb" x="1130" y="256">1100</text><text class="tb" x="1149" y="256">4.14</text>
<text class="tb" x="1054" y="263">4b</text><text class="tb" x="1066" y="263">Φ16</text><text class="tb" x="1078" y="263">2</text><text class="tb" x="1130" y="263">1700</text><text class="tb" x="1149" y="263">3.00</text>
<text class="tb" x="1054" y="270">5a</text><text class="tb" x="1066" y="270">Φ8</text><text class="tb" x="1078" y="270">12</text><text class="tb" x="1130" y="270">1064</text><text class="tb" x="1149" y="270">5.20</text>
<text class="tb" x="1054" y="277">5b</text><text class="tb" x="1066" y="277">Φ8</text><text class="tb" x="1078" y="277">12</text><text class="tb" x="1130" y="277">231</text><text class="tb" x="1149" y="277">0.51</text>
<text class="tb" x="1054" y="284">6a</text><text class="tb" x="1066" y="284">Φ16</text><text class="tb" x="1078" y="284">2</text><text class="tb" x="1130" y="284">3104</text><text class="tb" x="1149" y="284">3.00</text>
<text class="tb" x="1054" y="291">6b</text><text class="tb" x="1066" y="291">Φ16</text><text class="tb" x="1078" y="291">2</text><text class="tb" x="1130" y="291">3104</text><text class="tb" x="1149" y="291">3.00</text>
<text class="tb" x="1054" y="298">7a</text><text class="tb" x="1066" y="298">Φ8</text><text class="tb" x="1078" y="298">4</text><text class="tb" x="1130" y="298">1175</text><text class="tb" x="1149" y="298">4.19</text>
<text class="tb" x="1054" y="305">8a</text><text class="tb" x="1066" y="305">Φ8</text><text class="tb" x="1078" y="305">8</text><text class="tb" x="1130" y="305">231</text><text class="tb" x="1149" y="305">0.71</text>
<text class="tb" x="1130" y="312">总计</text><text class="tb" x="1149" y="312">71.00</text>
</g>
<path d="M1086 197h32M1086 204h32M1086 211h32M1090 218h26M1090 225h26M1092 232h24M1088 238q15 4 30 0M1088 245q15 4 30 0M1090 252h26M1090 260h26M1088 267h30M1090 273q12 4 24 0M1090 280h26M1090 287h26M1088 294h30M1088 301q15 -3 30 0" stroke="#e0481a" stroke-width="1.300" fill="none"/>
<path d="M1098 195v4M1108 195v4M1098 202v4M1108 202v4M1098 209v4M1108 209v4M1098 216v4M1108 216v4M1098 223v4M1108 223v4M1098 250v4M1108 250v4M1098 265v4M1108 265v4M1098 278v4M1108 278v4M1098 292v4M1108 292v4" stroke="#ff6a2a" stroke-width="2.200"/>
<rect x="1049" y="320" width="109" height="23.500" fill="none" stroke="#107298"/>
<path d="M1050 328h108M1050 336h108M1079 328v15M1097 328v15M1124 328v15M1136 328v15" stroke="#107298" stroke-width=".9"/>
<text x="1094" y="326.500" font-size="5" font-weight="bold" fill="#fff" text-anchor="middle">预埋件数量表</text>
<text class="tb" x="1064" y="334">简图</text><text class="tb" x="1088" y="334">规格</text><text class="tb" x="1110" y="334">规格型号</text><text class="tb" x="1130" y="334">数量</text><text class="tb" x="1147" y="334">备注</text>
<circle cx="1057" cy="339.500" r="2.500" fill="none" stroke="#ddd"/><path d="M1059 339.500h11" stroke="#ddd" stroke-width="1.500"/><text class="tb" x="1110" y="341.500">φ26x2x100mm</text><text class="tb" x="1130" y="341.500">8</text>
<rect x="1050" y="348" width="108" height="45" fill="none" stroke="#107298"/>
<path d="M1050 356.500h108M1050 366h108M1050 373h108M1050 380h108M1050 387h108M1085 356v37M1119 356v37M1144 356v37" stroke="#107298" stroke-width=".9"/>
<text x="1094" y="354.500" font-size="5" font-weight="bold" fill="#fff" text-anchor="middle">构件信息表</text>
<text class="tb" x="1067" y="362.500">构件型号</text><text class="tb" x="1102" y="362.500">体积(m³)</text><text class="tb" x="1132" y="362.500">重量(t)</text><text class="tb" x="1151" y="362.500">数量</text>
<text class="tb" x="1067" y="371.500">3220x290x2900</text><text class="tb" x="1102" y="371.500">1.212</text><text class="tb" x="1132" y="371.500">3.030</text><text class="tb" x="1151" y="371.500">1</text>
<text class="tb" x="1067" y="378.500">1950x180x1900</text><text class="tb" x="1102" y="378.500">0.333</text><text class="tb" x="1132" y="378.500">0.833</text><text class="tb" x="1151" y="378.500">1</text>
<text class="tb" x="1067" y="385.500">1700x200x1750</text><text class="tb" x="1102" y="385.500">0.595</text><text class="tb" x="1132" y="385.500">1.488</text><text class="tb" x="1151" y="385.500">1</text>
<text class="tb" x="1067" y="392">2200x90x2800</text><text class="tb" x="1102" y="392">0.207</text><text class="tb" x="1132" y="392">0.518</text><text class="tb" x="1151" y="392">1</text>
</g>

<!-- title block -->
<g fill="none" stroke="#b4b4b4" stroke-width="1.200">
<path d="M1158.500 179.500H1267.500V708M1163 225.500V708M1280 173V708M1278 400V708"/>
<path d="M1159 188.500H1267M1159 197.500H1267M1159 207.500H1267M1159 216.500H1267M1159 225.500H1267M1186 180V225M1238 180V225" />
<path d="M1163 402.500H1267"/>
<path d="M1163 513.500H1267M1163 543.500H1267M1163 573.500H1267M1163 604.500H1267M1163 634.500H1267M1163 664.500H1267M1163 694.500H1267M1198 484V634M1233 484V634"/>
</g>
<text x="1166" y="185.500" font-size="4.400" fill="#aaa">版本 / A0</text><text x="1189" y="185.500" font-size="4.400" fill="#aaa">出版日期 / 2018.01.08</text><text x="1241" y="185.500" font-size="4.400" fill="#aaa">日期 / DATE</text>
<text x="1166" y="233" font-size="6" fill="#aaa">签章 / 说明</text>
<text class="tt" x="1180" y="495">技术负责</text><text class="tb" x="1180" y="503">DESIGN CHIEF</text>
<text class="tt" x="1178" y="526">项目负责</text><text class="tb" x="1180" y="534">PROJECT MGR</text>
<text class="tt" x="1180" y="556">审核</text><text class="tb" x="1180" y="562">REVIEWED BY</text>
<text class="tt" x="1180" y="588">校对</text><text class="tb" x="1180" y="596">CHECKED BY</text>
<text class="tt" x="1180" y="618">设计</text><text class="tb" x="1180" y="626">DESIGNED BY</text>
<text class="tt" x="1184" y="644">建设单位</text><text class="tb" x="1235" y="644">CONSTRUCTION COMPANY</text>
<text class="tt" x="1184" y="675">工程名称</text><text class="tb" x="1245" y="675">PROJECT NAME</text>
<text class="tt" x="1184" y="705">项目名称</text><text class="tb" x="1250" y="706">ITEM NAME</text>

<!-- position plan -->
<g stroke="#5e5e5e" stroke-width="1" fill="none">
<path d="M1052 421h103M1052 431h10M1062 421v58M1073 421v10M1084 421v10M1095 421v10M1106 421v10M1117 421v10M1128 421v10M1141 405v25M1135 420h15"/>
</g>
<text class="lbl" x="1089" y="490">构件定位图</text><path d="M1069 491.500h36" stroke="#aaa" stroke-width=".7"/>
<path d="M934 498v25M919 513h30" stroke="#444" stroke-width="1"/>

<!-- isometric wall -->
<g>
<path d="M1116 504L1157 525V580L1116 558z" fill="none" stroke="#c6ae6e" stroke-width="1.500"/>
<path d="M1119 505L1155 526" stroke="#e8480f" stroke-width="4" stroke-dasharray="2 1"/>
<path d="M1117 510V556M1149 530V576" stroke="#e8480f" stroke-width="3.500" stroke-dasharray="1.500 1.500"/>
<path d="M1124 520L1140 529V558L1124 549z" fill="none" stroke="#d6be7e" stroke-width="1.500"/>
<path d="M1127 524L1137 530V553L1127 547z" fill="none" stroke="#8a7a48" stroke-width="1"/>
<path d="M1119 562L1152 580M1157 525V580" stroke="#d6be7e" stroke-width="1.500"/>
</g>
<text class="lbl" x="1136" y="597">轴侧视图</text><path d="M1124 599h24" stroke="#aaa" stroke-width=".7"/>

<!-- axes -->
<path d="M359 643V673" stroke="#0e8a5a" stroke-width="1.400"/><path d="M359 673H389" stroke="#c40000" stroke-width="1.400"/>
<text x="359" y="639" font-size="9" fill="#666" text-anchor="middle">Y</text><text x="397" y="677" font-size="11" fill="#666" text-anchor="middle">X</text><text x="359" y="677.500" font-size="11" fill="#666" text-anchor="middle">Z</text>

<!-- 上 -->
<rect x="1252" y="214" width="33" height="32" fill="#eee" stroke="#ddd"/>
<text x="1268.500" y="236" font-size="17" text-anchor="middle" fill="#bdbdbd">上</text>

<!-- orange box 1 -->
<g>
<rect x="844.500" y="85.500" width="73" height="404" fill="#000"/>
<path d="M846 99H916" stroke="#107298" stroke-width="1"/>
<text class="dv" x="895" y="98" textLength="12" lengthAdjust="spacingAndGlyphs">300</text>
<text class="dv" x="912" y="110" textLength="8" lengthAdjust="spacingAndGlyphs">50</text>
<path d="M910 99v14M915 99v14" stroke="#107298"/>
<g fill="#000" stroke="#6fb9c6" stroke-width="1.200"><circle cx="855" cy="118" r="6.700"/><circle cx="882" cy="118" r="6.700"/></g>
<text x="855" y="121" font-size="7.500" fill="#9ed5de" text-anchor="middle">1Lc</text><text x="882" y="121" font-size="7.500" fill="#9ed5de" text-anchor="middle">2f</text>
<path d="M855 125V155h6M882 125V161h-3" stroke="#7fb6c0" fill="none" stroke-width="1"/>
<path d="M846 139H916" stroke="#ccc" stroke-dasharray="2 2" stroke-width="1"/>
<path d="M857 141v46M867 143v44M846 140v48" stroke="#c03a10" stroke-width="1.500"/><path d="M910 125V420" stroke="#a93610" stroke-width="1.400"/>
<rect x="846" y="153" width="72" height="2" fill="#9f8a4c"/><path d="M846 156H917" stroke="#e04a12" stroke-width="1.100"/>
<path d="M846 172H916" stroke="#e04a12" stroke-width="1.300"/><rect x="878" y="169" width="36" height="3.500" fill="#b03a10"/>
<path d="M866 171v10H916" stroke="#7fb6c0" fill="none"/>
<path d="M853 161l7-6M845 177l7-6M864 177l6-6" stroke="#ef7a6a" stroke-width="1.200"/>
<rect x="878" y="190" width="38" height="204" fill="url(#rungsA)"/>
<rect x="905" y="190" width="12" height="190" fill="url(#ticksA)"/>
<path d="M846 190.500H875.500V333H846" fill="none" stroke="#b9a76a" stroke-width="1.200"/>
<path d="M877.500 99V490" stroke="#1aa81a" stroke-width="1" stroke-dasharray="4 3"/><path d="M896.500 99V490" stroke="#1fc01f" stroke-width="1" stroke-dasharray="4 3"/>
<path d="M897 101L878 260" stroke="#e8183c" stroke-width="1" stroke-dasharray="3 2"/><path d="M878 260L890 420 896 480" stroke="#e02030" stroke-width="1" stroke-dasharray="3 2"/>
<rect x="846" y="335" width="72" height="3.500" fill="#b03a10"/>
<path d="M859 338V430M871 338V430M883 338V430M910 338V430" stroke="#e04a12" stroke-width="1.200"/>
<path d="M846 358H890M846 373H916M846 393H890M846 415H916M846 430H916M878 430V434M878 380H916M846 392H890" stroke="#e8480f" stroke-width="1.300"/>
<rect x="878" y="339" width="36" height="2" fill="#b03a10"/><rect x="846" y="392" width="32" height="2.500" fill="#8e3412"/>
<path d="M857 302V349h5" stroke="#7fb6c0" fill="none"/>
<path d="M901 384H908V366H916M910 370H916M908 396V405H916M906 412V426M910 405H916" stroke="#7fb6c0" fill="none"/>
<path d="M857 369l6-4M857 410l6-4M873 395l6-4M905 420l6-6M906 397l7-6M905 355l7-6" stroke="#ef7a6a" stroke-width="1.100"/>
<path d="M878 418h4v17h-4zM909 418h4v17h-4z" fill="none" stroke="#8fe06a" stroke-width="1"/>
<rect x="846" y="433" width="72" height="1.500" fill="#9f8a4c"/>
<path d="M860 440v15M872 440v15M880 440v19M895 440v19M910 440v19" stroke="#107298"/>
<path d="M846 459H917M846 479H917" stroke="#107298"/>
<text class="dv" x="876" y="457" textLength="8" lengthAdjust="spacingAndGlyphs">90</text><text class="dv" x="896" y="457" textLength="12" lengthAdjust="spacingAndGlyphs">300</text><text class="dv" x="866" y="468" textLength="11" lengthAdjust="spacingAndGlyphs">110</text><text class="dv" x="913" y="468" textLength="8" lengthAdjust="spacingAndGlyphs">50</text>
<path d="M877 478H896" stroke="#1aa81a"/>
<rect x="844.500" y="85.500" width="73" height="404" fill="none" stroke="#f5843c" stroke-width="3"/>
</g>
<!-- orange box 2 -->
<g>
<rect x="994.500" y="84.500" width="52.500" height="410" fill="#000"/>
<text x="1017" y="100" font-size="9" fill="#5fbf1f" text-anchor="middle">6</text><path d="M1021 92v11" stroke="#5fbf1f"/>
<text class="dv" x="1021" y="113" textLength="12" lengthAdjust="spacingAndGlyphs">300</text><text class="dv" x="1037" y="124" textLength="8" lengthAdjust="spacingAndGlyphs">50</text>
<path d="M996 115H1046M1007 115v6M1034 115v13M1040 115v13" stroke="#107298"/>
<circle cx="1009" cy="133" r="6" fill="#000" stroke="#6fb9c6" stroke-width="1.200"/><text x="1009" y="136" font-size="7" fill="#9ed5de" text-anchor="middle">2f</text>
<path d="M1008 139V170" stroke="#7fb6c0"/>
<path d="M996 151H1046" stroke="#ccc" stroke-dasharray="2 2"/>
<path d="M998 153V190M1034.500 138V178" stroke="#b03a10" stroke-width="1.600"/>
<path d="M996 163H1039V240" stroke="#9f8a4c" fill="none" stroke-width="1"/><path d="M996 166H1046" stroke="#e04a12" stroke-width="1.200"/>
<rect x="996" y="178" width="50" height="2" fill="#d8400f"/>
<rect x="996" y="188" width="50" height="1.500" fill="#6e8a92"/>
<rect x="996" y="195" width="50" height="4" fill="#7a2a10"/>
<path d="M996 197H1002.500V328H996" fill="none" stroke="#b9a76a" stroke-width="1.200"/>
<path d="M1006 196V420M1036 196V420" stroke="#a93610" stroke-width="1.200"/>
<rect x="1006" y="216" width="40" height="200" fill="url(#rungsB)"/>
<rect x="1029" y="215" width="12" height="200" fill="url(#ticksB)"/>
<path d="M996 331H1026M996 349H1026M996 361H1026M996 382H1026M996 400H1026" stroke="#e8480f" stroke-width="1.300"/><path d="M998 331V415" stroke="#d8400f"/>
<path d="M1034 344H1046M1034 356V368H1026M1034 382H1046M1030 392V410" stroke="#7fb6c0" fill="none"/>
<path d="M1005 403h4v14h-4zM1033 403h4v14h-4z" fill="none" stroke="#8fe06a"/>
<path d="M996 417H1040" stroke="#9f8a4c"/>
<path d="M996 419H1046" stroke="#aaa" stroke-dasharray="2 2"/>
<path d="M1006 424v16M1019 424v16M1037 424v16M996 441H1046M996 459H1040" stroke="#107298"/>
<text class="dv" x="1003" y="439" textLength="8" lengthAdjust="spacingAndGlyphs">90</text><text class="dv" x="1020" y="439" textLength="12" lengthAdjust="spacingAndGlyphs">300</text><text class="dv" x="1037" y="449" textLength="8" lengthAdjust="spacingAndGlyphs">50</text>
<text x="1017" y="483" font-size="9" fill="#5fbf1f" text-anchor="middle">6</text><path d="M1021 471v11" stroke="#5fbf1f"/>
<rect x="994.500" y="84.500" width="52.500" height="410" fill="none" stroke="#f5843c" stroke-width="3"/>
</g>

<!-- command bar -->
<rect x="323" y="709" width="1002" height="20.500" fill="#e5e5e5"/>
<rect x="323" y="710" width="837" height="19" fill="#fff"/>
<path d="M325 714v12" stroke="#999" stroke-dasharray="1 1.500"/><text x="333" y="722" font-size="8.400" fill="#9a9a9a">在此输入命令</text>
<path d="M729 722l3.500-3 3.500 3" fill="none" stroke="#888" stroke-width="1"/><path d="M721 712v14M744.500 712v14" stroke="#e6e6e6"/>
<use href="#hlb" x="749" y="711"/><rect x="752" y="714" width="2" height="10" fill="#e05a5a"/><path d="M756 714v10M760 720l3 3" stroke="#4b8f9a" fill="none"/>
<use href="#tdoc" x="768" y="714"/><use href="#tdoc" x="785" y="714"/><use href="#tw" x="801" y="714"/>
<use href="#hlb" x="817" y="711"/><path d="M821 715h9v10h-9z" fill="none" stroke="#3b7f8a"/><path d="M820 714h2v2h-2zM829 714h2v2h-2zM820 724h2v2h-2zM829 724h2v2h-2z" fill="#3b7f8a"/>
<use href="#hlb" x="838" y="711"/><path d="M841 720l5-4 5 4-5 3.500z" fill="#fff" stroke="#3b7f8a"/>
<use href="#hlb" x="855" y="711"/><use href="#cube" x="857" y="714"/>
<use href="#hlb" x="872" y="711"/><rect x="877" y="714" width="6" height="11" rx="3" fill="#e0f0ee" stroke="#3b7f8a"/>
<use href="#hlb" x="888" y="711"/><use href="#tw" x="890" y="714"/>
<use href="#hlb" x="905" y="711"/><rect x="908" y="715" width="10" height="10" fill="#8fc8c0"/><path d="M913 715v10M908 720h10" stroke="#fff" stroke-width="2"/>
<use href="#hlb" x="922" y="711"/><rect x="925" y="715" width="10" height="10" fill="#e8f6f4" stroke="#3b7f8a"/>
<path d="M942.500 712v14" stroke="#e6e6e6"/>
<use href="#cube" x="947" y="714"/><use href="#cube" x="964" y="714"/><use href="#cube" x="981" y="714"/>
<path d="M999 712v14" stroke="#aaa" stroke-dasharray="1 1.500"/>
<use href="#tdoc" x="1005" y="714"/><path d="M1023 712v14" stroke="#e6e6e6"/>
<use href="#tdoc" x="1028" y="714"/><use href="#tw" x="1045" y="714"/><use href="#tw" x="1062" y="714"/><path d="M1079 712v14" stroke="#e6e6e6"/>
<path d="M1085 724l7-9 3 2-7 9z" fill="#eaf6f7" stroke="#4b8f9a"/><path d="M1101 712v14" stroke="#e6e6e6"/>
<use href="#tw" x="1106" y="714"/><path d="M1123 712v14" stroke="#e6e6e6"/>
<use href="#tdoc" x="1128" y="714"/><path d="M1146 725h9v-11h-4v7h-5z" fill="#d8eef0" stroke="#4b8f9a"/>

<!-- status bar -->
<rect x="77" y="730" width="1248" height="19" fill="#f1f1f1"/>
<rect x="77" y="748.300" width="1248" height="1" fill="#f1ebdc"/>
<path d="M82.500 735h3l1.500 1.500h6v8h-10.500z" fill="none" stroke="#4b8f9a" stroke-width="1"/>
<path d="M100 735h8M100 745h8M100 735v10M108 735v10M103 737v6M105 737v6" fill="none" stroke="#4b8f9a"/>
<rect x="116" y="735" width="10" height="8" fill="none" stroke="#4b8f9a"/><path d="M121 745h5M125 743v4" stroke="#19a89c"/>
<path d="M132 733v12" stroke="#e0e0e0"/>
<rect x="138" y="734" width="10" height="10" fill="none" stroke="#4b8f9a"/><path d="M143 736v6M140 739h6" stroke="#1c6a80" stroke-width="1.400"/>
<path d="M155 744v-6q0-1 1-1v3-5q0-1 1-1t1 1v4-5q0-1 1-1t1 1v5-4q0-1 1-1t1 1v7l-2 3h-5z" fill="none" stroke="#4b8f9a"/>
<path d="M176 734l2.500 2.500h-1.500v2h2v-1.500l2.500 2.500-2.500 2.500v-1.500h-2v2h1.500l-2.500 2.500-2.500-2.500h1.500v-2h-2v1.500l-2.500-2.500 2.500-2.500v1.500h2v-2h-1.500z" fill="none" stroke="#4b8f9a"/>
<circle cx="192" cy="737.500" r="3.800" fill="none" stroke="#4b8f9a"/><path d="M195 741l3.500 3.500" stroke="#4b8f9a" stroke-width="1.300"/>
<path d="M204 733v12" stroke="#e0e0e0"/>
<use href="#cube" x="208" y="733"/>
<rect x="225" y="731.500" width="13" height="14" fill="#bfe0da" stroke="#4fa896"/><circle cx="231.500" cy="738.500" r="4.500" fill="none" stroke="#3b7f8a"/><path d="M231.500 734v9M227.500 738.500h8" stroke="#3b7f8a"/>
<use href="#cube" x="242" y="733"/><use href="#cube" x="259" y="733"/><use href="#cubeb" x="276" y="733" opacity=".5"/>
<path d="M292.500 733v12" stroke="#e0e0e0"/>
<use href="#tw" x="297" y="733"/>
<rect x="314" y="731.500" width="14" height="14" fill="#9fd2cb" stroke="#4fa896"/><path d="M316 735h10M316 738h10M316 741h10M318 743l7-8" stroke="#3b7f8a"/>
<path d="M334 738l3-3 3 3M334 741l3-3 3 3" fill="none" stroke="#4b8f9a"/>
<path d="M348.500 733v12" stroke="#e0e0e0"/>
<path d="M356 738.500h6" stroke="#999" stroke-width="1.200"/><path d="M367 738.500h40" stroke="#ccc"/><rect x="388" y="734.500" width="3.500" height="8" fill="#f4f4f4" stroke="#aaa"/><path d="M413 738.500h6M416 735.500v6" stroke="#999" stroke-width="1.200"/>
<text x="691" y="740.500" font-size="8.500" fill="#7d7d7d" textLength="93">12976.07 , 7153.63 , 0.49</text>
<path d="M1184 737.500h9v2l-3 4h-5l-1-3 5-.5" fill="none" stroke="#4b8f9a"/>
<rect x="1198" y="731.500" width="14" height="14" fill="#e0f0ee" stroke="#4fa896"/><rect x="1199" y="735" width="12" height="9" fill="#fff" stroke="#3b7f8a"/>
<path d="M1213.500 739l2.500-2.500 2.500 2.500" fill="none" stroke="#999"/>
<rect x="1221.500" y="731.500" width="13" height="14" fill="#bfe0da" stroke="#4fa896"/><path d="M1224 744l8-10M1225 740h4v4" fill="none" stroke="#3b7f8a"/>
<rect x="1239" y="731.500" width="13" height="14" fill="#bfe0da" stroke="#4fa896"/><path d="M1241 734l7 10h-7" fill="none" stroke="#3b7f8a"/>
<path d="M1258 733v11h10M1258 740l3 1" fill="none" stroke="#4b8f9a"/>
<rect x="1274" y="733" width="10" height="10" fill="#e8f4f4" stroke="#2d7e8c"/><path d="M1274 736.300h10M1274 739.700h10M1277.300 733v10M1280.700 733v10" stroke="#2d7e8c"/>
<path d="M1296 733l5 5-5 5-5-5z" fill="none" stroke="#4b8f9a"/><circle cx="1296" cy="738" r="1.700" fill="#4b8f9a"/>
<use href="#gear" transform="translate(1308.500 733) scale(1.200)"/>

<!-- dialog 1 -->
<g>
<rect x="90.500" y="228.500" width="269" height="143.500" fill="#f7f7f7" stroke="#cfcfcf"/>
<rect x="96" y="253" width="258" height="114" fill="#eeeeee"/>
<text x="100" y="245.500" font-size="9.900" fill="#3a3a3a" font-weight="bold" stroke="none">剖面图表达规则设置</text>
<path d="M344.500 238l6 6M350.500 238l-6 6" stroke="#777" stroke-width="1.100"/>
<rect x="106" y="260" width="238" height="17" fill="#d2d2d2"/>
<text class="dl" x="112" y="273">剖面图显示设置</text>
<rect x="117.500" y="292.500" width="8" height="8" fill="#fff" stroke="#bbb"/><text class="dl" x="128" y="300">隐藏钢筋</text>
<rect x="258.500" y="292.500" width="8.500" height="8" fill="#fff" stroke="#bbb"/><path d="M260 296.500l2 2 3.500-4" fill="none" stroke="#777"/><text class="dl" x="270" y="300">隐藏外叶板</text>
<rect x="117.500" y="315.500" width="8" height="8" fill="#fff" stroke="#bbb"/><text class="dl" x="128" y="323">隐藏混凝土内钢筋</text>
<rect x="258.500" y="315.500" width="8.500" height="8" fill="#fff" stroke="#bbb"/><path d="M260 319.500l2 2 3.500-4" fill="none" stroke="#777"/><text class="dl" x="270" y="323">表达隐藏线</text>
<rect x="202.500" y="338.500" width="60.500" height="18.500" fill="#fff" stroke="#b8b8b8"/><text x="232.500" y="351.500" font-size="9.900" fill="#666" text-anchor="middle">确定</text>
<rect x="283.500" y="338.500" width="60.500" height="18.500" fill="#fff" stroke="#b8b8b8"/><text x="313.500" y="351.500" font-size="9.900" fill="#666" text-anchor="middle">取消</text>
</g>
<!-- dialog 2 -->
<g>
<rect x="428.500" y="488.500" width="231" height="127.500" fill="#f7f7f7" stroke="#cfcfcf"/>
<rect x="434" y="518" width="220" height="92" fill="#eeeeee"/>
<text x="439" y="508" font-size="11.500" fill="#3a3a3a" font-weight="bold">剖面图编号设置</text>
<path d="M642 500.500l6 6M648 500.500l-6 6" stroke="#777" stroke-width="1.200"/>
<text x="449" y="550" font-size="10.600" fill="#666">剖面编号：</text>
<rect x="518.500" y="537.500" width="119" height="21" fill="#fff" stroke="#aaa"/>
<text x="521" y="551" font-size="10" fill="#666">6</text><path d="M528 541v12" stroke="#333"/>
<rect x="482" y="578" width="70.500" height="20.500" fill="#fff" stroke="#2e8e7c" stroke-width="2"/><text x="516.500" y="591.500" font-size="10.800" fill="#666" text-anchor="middle">确定</text>
<rect x="566.500" y="577.500" width="71" height="21" fill="#fff" stroke="#b8b8b8"/><text x="601.500" y="591.500" font-size="10.800" fill="#666" text-anchor="middle">取消</text>
</g>

<!-- callouts -->
<g>
<rect x="117" y="381" width="243" height="31" fill="#6c6866" fill-opacity=".96"/>
<circle cx="134" cy="397" r="5" fill="#fff"/><text class="call" x="147" y="403">支持对表达内容进行设置</text>
<rect x="499" y="607" width="184" height="31" fill="#6c6866" fill-opacity=".96"/>
<circle cx="515.500" cy="623" r="5" fill="#fff"/><text class="call" x="529" y="629">支持设置剖面编号</text>
<rect x="851" y="505" width="243" height="74" fill="#6c6866" fill-opacity=".96"/>
<circle cx="868" cy="530" r="5" fill="#fff"/><text class="call" x="881" y="536">支持过程中调整剖切范围</text><text class="call" x="881" y="567">及剖切方向</text>
<rect x="1062" y="428" width="216" height="56" fill="#6c6866" fill-opacity=".96"/>
<circle cx="1079" cy="444" r="5" fill="#fff"/><text class="call" x="1093" y="450">剖切符号样式对接基本</text><text class="call" x="1093" y="471">设置中符号样式设置</text>
</g>
</svg>
</body></html>
